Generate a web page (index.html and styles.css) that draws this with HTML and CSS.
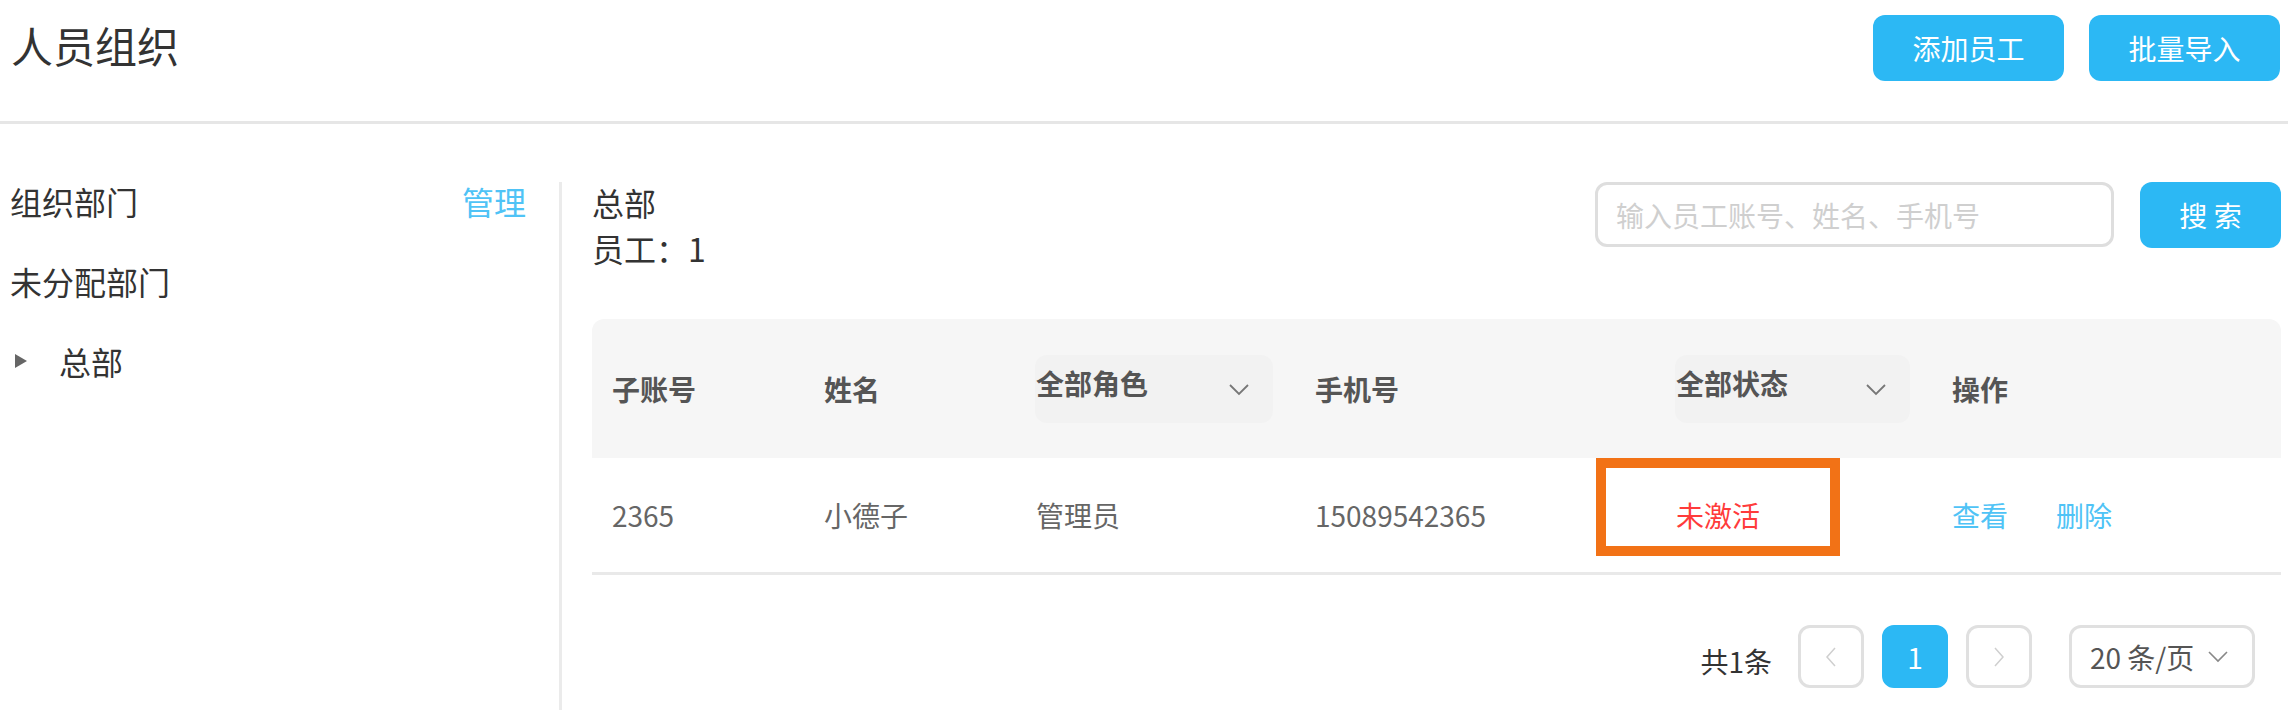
FILE: index.html
```
<!DOCTYPE html>
<html lang="zh">
<head>
<meta charset="utf-8">
<title>人员组织</title>
<link rel="stylesheet" href="styles.css">
</head>
<body>
<header class="topbar">
  <h1 class="title">人员组织</h1>
  <div class="actions">
    <button class="btn">添加员工</button>
    <button class="btn">批量导入</button>
  </div>
</header>
<div class="main">
  <aside class="dept">
    <div class="dept-row"><span>组织部门</span><a class="link">管理</a></div>
    <div class="dept-row"><span>未分配部门</span></div>
    <div class="dept-row tree"><span class="caret"></span><span>总部</span></div>
  </aside>
  <section class="content">
    <div class="content-head">
      <div class="info">
        <div>总部</div>
        <div>员工：1</div>
      </div>
      <div class="search">
        <input class="search-input" type="text" placeholder="输入员工账号、姓名、手机号">
        <button class="btn btn-search">搜 索</button>
      </div>
    </div>
    <div class="table">
      <div class="thead">
        <div class="cell">子账号</div>
        <div class="cell">姓名</div>
        <div class="cell">
          <div class="sel sel-role"><span class="sel-text">全部角色</span>
            <svg class="chev" width="20" height="12" viewBox="0 0 20 12"><polyline points="1,1 10,10 19,1" fill="none" stroke="#777" stroke-width="1.8"/></svg>
          </div>
        </div>
        <div class="cell">手机号</div>
        <div class="cell">
          <div class="sel sel-status"><span class="sel-text">全部状态</span>
            <svg class="chev" width="20" height="12" viewBox="0 0 20 12"><polyline points="1,1 10,10 19,1" fill="none" stroke="#777" stroke-width="1.8"/></svg>
          </div>
        </div>
        <div class="cell">操作</div>
      </div>
      <div class="trow">
        <div class="cell">2365</div>
        <div class="cell">小德子</div>
        <div class="cell">管理员</div>
        <div class="cell">15089542365</div>
        <div class="cell status"><span class="mark"></span><span class="inactive">未激活</span></div>
        <div class="cell ops"><a class="link">查看</a><a class="link del">删除</a></div>
      </div>
    </div>
    <div class="pager">
      <span class="total">共1条</span>
      <span class="pbtn"><svg width="12" height="20" viewBox="0 0 12 20"><polyline points="10,1 2,10 10,19" fill="none" stroke="#cfcfcf" stroke-width="1.5"/></svg></span>
      <span class="pbtn pcur">1</span>
      <span class="pbtn pnext"><svg width="12" height="20" viewBox="0 0 12 20"><polyline points="2,1 10,10 2,19" fill="none" stroke="#cfcfcf" stroke-width="1.5"/></svg></span>
      <span class="psize"><span>20 条/页</span>
        <svg width="20" height="12" viewBox="0 0 20 12"><polyline points="1,1 10,10 19,1" fill="none" stroke="#888" stroke-width="1.6"/></svg>
      </span>
    </div>
  </section>
</div>
</body>
</html>
```
FILE: styles.css
```
* { box-sizing: border-box; }
html, body { margin: 0; padding: 0; background: #fff; }
body {
  font-family: "Noto Sans CJK SC", "Noto Sans", sans-serif;
  color: #333;
  width: 2288px;
  overflow: hidden;
}
.topbar {
  display: flex;
  justify-content: space-between;
  align-items: flex-start;
  height: 124px;
  padding: 15px 8px 0 11px;
  border-bottom: 3px solid #e6e6e6;
}
.title {
  margin: -3px 0 0 0;
  font-size: 42px;
  font-weight: normal;
  line-height: 66px;
  color: #333;
}
.actions { display: flex; gap: 25px; }
.btn {
  width: 191px;
  height: 66px;
  border: none;
  border-radius: 12px;
  background: #2cb8f4;
  color: #fff;
  font-family: inherit;
  font-size: 28px;
  padding: 0;
  cursor: pointer;
}
.main { display: flex; align-items: flex-start; }
.dept {
  width: 559px;
  padding: 37px 33px 0 10px;
}
.dept-row {
  height: 80px;
  display: flex;
  align-items: center;
  justify-content: space-between;
  font-size: 32px;
  color: #333;
}
.dept-row.tree { justify-content: flex-start; }
.caret {
  width: 0; height: 0;
  margin: 0 32px 0 5px;
  border-top: 7px solid transparent;
  border-bottom: 7px solid transparent;
  border-left: 12px solid #666;
}
.link { color: #4fc3f6; cursor: pointer; }
.content {
  flex: 1;
  margin-top: 58px;
  min-height: 528px;
  border-left: 3px solid #ebebeb;
  padding: 0 7px 0 30px;
}
.content-head {
  display: flex;
  justify-content: space-between;
  align-items: flex-start;
  height: 137px;
}
.info {
  margin-top: -3px;
  font-size: 32px;
  line-height: 46px;
  color: #333;
}
.search { display: flex; gap: 26px; }
.search-input {
  width: 519px;
  height: 65px;
  border: 3px solid #dedede;
  border-radius: 12px;
  padding: 0 0 0 18px;
  font-family: inherit;
  font-size: 28px;
  color: #333;
  outline: none;
}
.search-input::placeholder { color: #cfcfcf; }
.btn-search { width: 141px; }
.thead, .trow {
  display: grid;
  grid-template-columns: 212px 212px 279px 361px 276px 1fr;
}
.thead {
  height: 139px;
  background: #f6f6f6;
  border-radius: 12px 12px 0 0;
  align-items: center;
  font-size: 28px;
  font-weight: bold;
  color: #555;
}
.cell {
  padding-left: 20px;
  white-space: nowrap;
}
.sel {
  display: flex;
  align-items: center;
  justify-content: space-between;
  height: 68px;
  margin-left: -1px;
  padding: 0 24px 0 1px;
  background: #f2f2f2;
  border-radius: 12px;
}
.sel-role { width: 238px; }
.sel-status { width: 235px; }
.sel-text { margin-bottom: 12px; }
.chev { margin-top: 2px; }
.trow {
  height: 117px;
  border-bottom: 3px solid #e9e9e9;
  font-size: 28px;
  color: #666;
}
.trow .cell {
  display: flex;
  align-items: center;
}
.status { position: relative; }
.mark {
  position: absolute;
  left: -60px;
  top: 0;
  width: 244px;
  height: 98px;
  border: 10px solid #f27216;
}
.inactive { color: #ff3b3b; }
.ops .del { margin-left: 48px; }
.pager {
  display: flex;
  justify-content: flex-end;
  align-items: center;
  margin-top: 50px;
  padding-right: 26px;
  font-size: 28px;
}
.total { color: #333; margin-right: 26px; margin-top: 8px; }
.pbtn {
  width: 66px;
  height: 63px;
  border: 3px solid #e0e0e0;
  border-radius: 12px;
  display: flex;
  align-items: center;
  justify-content: center;
  margin-right: 18px;
  color: #fff;
}
.pcur { background: #2cb8f4; border-color: #2cb8f4; }
.pnext { margin-right: 37px; }
.psize {
  width: 186px;
  height: 63px;
  border: 3px solid #e0e0e0;
  border-radius: 12px;
  display: flex;
  align-items: center;
  justify-content: space-between;
  padding: 0 24px 0 18px;
  color: #555;
}
```
